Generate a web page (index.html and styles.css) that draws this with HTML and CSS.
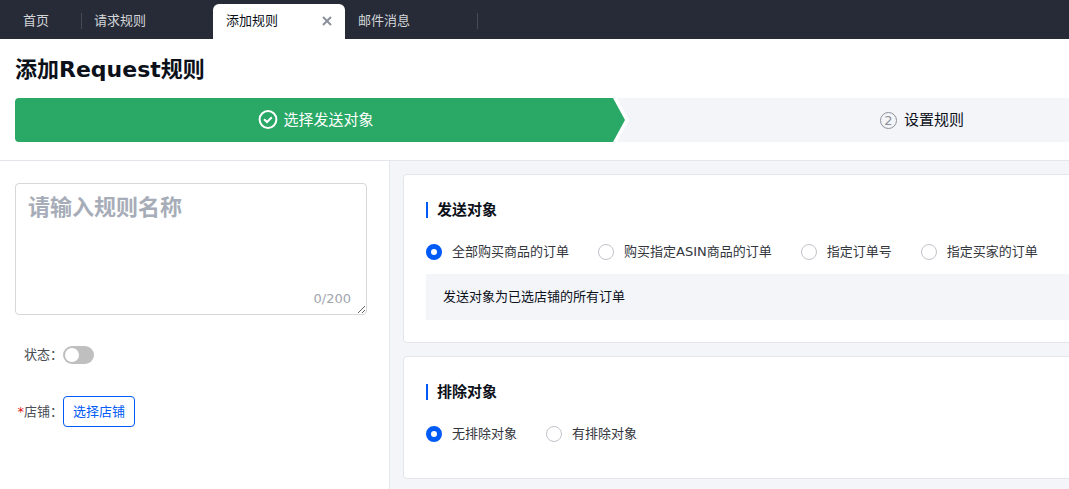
FILE: index.html
```html
<!DOCTYPE html>
<html lang="zh-CN">
<head>
<meta charset="utf-8">
<title>添加Request规则</title>
<link rel="stylesheet" href="styles.css">
</head>
<body>
<div class="app">
  <nav class="tabs">
    <a class="tab tab-home" href="#">首页</a>
    <a class="tab" href="#">请求规则</a>
    <div class="tab tab-active">
      <a class="tab-link" href="#" aria-current="page">添加规则</a>
      <button class="tab-close" type="button" aria-label="关闭">
        <svg width="10" height="10" viewBox="0 0 10 10"><path d="M1 1l8 8M9 1L1 9" stroke="currentColor" stroke-width="2" fill="none"/></svg>
      </button>
    </div>
    <a class="tab tab-ruled" href="#">邮件消息</a>
  </nav>

  <header class="page-head">
    <h1 class="page-title">添加Request规则</h1>
    <ol class="steps">
      <li class="step step-done">
        <svg width="20" height="20" viewBox="0 0 20 20" fill="none" stroke="currentColor" stroke-width="2"><circle cx="10" cy="9.5" r="8.4"/><path d="M6 9.2l3 2.8 4.8-4.8"/></svg>
        <span>选择发送对象</span>
      </li>
      <li class="step step-next">
        <span class="step-number">2</span>
        <span>设置规则</span>
      </li>
    </ol>
  </header>

  <div class="columns">
    <aside class="side">
      <div class="name-field">
        <textarea class="name-input" placeholder="请输入规则名称" aria-label="规则名称" maxlength="200"></textarea>
        <span class="counter">0/200</span>
      </div>
      <div class="form-row">
        <label class="form-label" for="status">状态：</label>
        <input class="switch" id="status" type="checkbox" role="switch">
      </div>
      <div class="form-row">
        <label class="form-label" for="shop"><span class="required">*</span>店铺：</label>
        <button class="shop-button" id="shop" type="button">选择店铺</button>
      </div>
    </aside>

    <main class="content">
      <section class="card">
        <h2 class="card-title">发送对象</h2>
        <div class="radios">
          <label class="radio"><input type="radio" name="target" checked>全部购买商品的订单</label>
          <label class="radio"><input type="radio" name="target">购买指定ASIN商品的订单</label>
          <label class="radio"><input type="radio" name="target">指定订单号</label>
          <label class="radio"><input type="radio" name="target">指定买家的订单</label>
        </div>
        <p class="notice">发送对象为已选店铺的所有订单</p>
      </section>
      <section class="card">
        <h2 class="card-title">排除对象</h2>
        <div class="radios">
          <label class="radio"><input type="radio" name="exclude" checked>无排除对象</label>
          <label class="radio"><input type="radio" name="exclude">有排除对象</label>
        </div>
      </section>
    </main>
  </div>
</div>
</body>
</html>
```
FILE: styles.css
```css
* {
  box-sizing: border-box;
}

body {
  margin: 0;
  background: #fff;
  color: #0b1019;
  font: 13px/20px "DejaVu Sans", "Noto Sans CJK SC", sans-serif;
}

button,
textarea {
  font-family: inherit;
}

.app {
  display: flex;
  flex-direction: column;
  min-height: 100vh;
  overflow: hidden;
}

/* Tab bar */
.tabs {
  display: flex;
  align-items: flex-end;
  height: 39px;
  background: #262b37;
}

.tab {
  position: relative;
  display: flex;
  align-items: center;
  justify-content: space-between;
  width: 132px;
  height: 35px;
  padding: 0 13px 2px;
  color: #d3d5d9;
  text-decoration: none;
}

.tab-home {
  width: 81px;
  padding-left: 23px;
}

.tab-home::after,
.tab-ruled::after {
  content: "";
  position: absolute;
  top: 9px;
  right: -1px;
  width: 1px;
  height: 16px;
  background: #464b56;
}

.tab-active {
  border-radius: 6px 6px 0 0;
  background: #fff;
}

.tab-link {
  color: #0b1019;
  text-decoration: none;
}

.tab-close {
  display: flex;
  padding: 0;
  border: 0;
  background: none;
  color: #8b909a;
}

/* Heading and steps */
.page-head {
  padding: 16px 15px 18px;
  border-bottom: 1px solid #e4e6eb;
}

.page-title {
  margin: 0 0 13px;
  font-size: 22px;
  line-height: 30px;
}

.steps {
  display: flex;
  min-width: 1208px;
  margin: 0;
  padding: 0;
  list-style: none;
  font-size: 15px;
}

.step {
  display: flex;
  flex: 1;
  align-items: center;
  justify-content: center;
  gap: 5px;
  height: 44px;
}

.step-done {
  padding-right: 8px;
  border-radius: 4px 0 0 4px;
  background: #2aa866;
  color: #fff;
  clip-path: polygon(0 0, calc(100% - 12px) 0, 100% 50%, calc(100% - 12px) 100%, 0 100%);
}

.step-next {
  margin-left: -8px;
  padding-left: 4px;
  background: #f4f5f9;
  clip-path: polygon(0 0, 100% 0, 100% 100%, 0 100%, 12px 50%);
}

.step-number {
  width: 17px;
  margin-right: 2px;
  border: 1px solid #8b909a;
  border-radius: 50%;
  color: #8b909a;
  font-size: 13px;
  line-height: 15px;
  text-align: center;
}

/* Left column */
.columns {
  display: flex;
  flex: 1;
}

.side {
  flex: 0 0 390px;
  padding: 22px 22px 22px 15px;
  border-right: 1px solid #e4e6eb;
}

.name-field {
  position: relative;
  margin-bottom: 24px;
}

.name-input {
  display: block;
  width: 100%;
  height: 132px;
  padding: 8px 12px;
  border: 1px solid #d5d7da;
  border-radius: 4px;
  outline: 0;
  color: #0b1019;
  font-size: 22px;
  font-weight: 700;
  line-height: 32px;
}

.name-input::placeholder {
  color: #a7adb8;
}

.counter {
  position: absolute;
  right: 16px;
  bottom: 6px;
  color: #a0a5ae;
}

.form-row {
  display: flex;
  align-items: center;
  height: 31px;
  margin-bottom: 26px;
}

.form-label {
  width: 48px;
  color: #4a4d55;
  text-align: right;
  white-space: nowrap;
}

.required {
  color: #e02020;
}

.switch {
  display: flex;
  align-items: center;
  width: 31px;
  height: 18px;
  margin: 0;
  padding: 0 2px;
  border-radius: 9px;
  appearance: none;
  background: #bfbfbf;
}

.switch::before {
  content: "";
  width: 14px;
  height: 14px;
  border-radius: 50%;
  background: #fff;
}

.switch:checked {
  justify-content: flex-end;
  background: #005af5;
}

.shop-button {
  height: 31px;
  padding: 0 9px 2px;
  border: 1px solid #005af5;
  border-radius: 4px;
  background: #fff;
  color: #005af5;
  font-size: 13px;
}

/* Right column */
.content {
  display: flex;
  flex: 1;
  flex-direction: column;
  gap: 13px;
  min-width: 840px;
  padding: 13px 13px 10px;
  background: #f4f5f9;
}

.card {
  padding: 24px 22px 22px;
  border: 1px solid #e4e6eb;
  border-radius: 4px;
  background: #fff;
}

.card-title {
  display: flex;
  align-items: center;
  gap: 9px;
  margin: 0 0 19px;
  font-size: 15px;
  line-height: 22px;
}

.card-title::before {
  content: "";
  width: 2px;
  height: 16px;
  background: #005af5;
}

.radios {
  display: flex;
  gap: 29px;
  margin-bottom: 10px;
}

.radio {
  display: flex;
  align-items: center;
  gap: 10px;
  height: 24px;
  color: #33363d;
  white-space: nowrap;
}

.radio input {
  width: 16px;
  height: 16px;
  margin: 0;
  border: 1px solid #c0c3c9;
  border-radius: 50%;
  appearance: none;
  background: #fff;
}

.radio input:checked {
  border: 5px solid #005af5;
}

.notice {
  margin: 0;
  padding: 13px 17px;
  background: #f4f5f9;
}
```
